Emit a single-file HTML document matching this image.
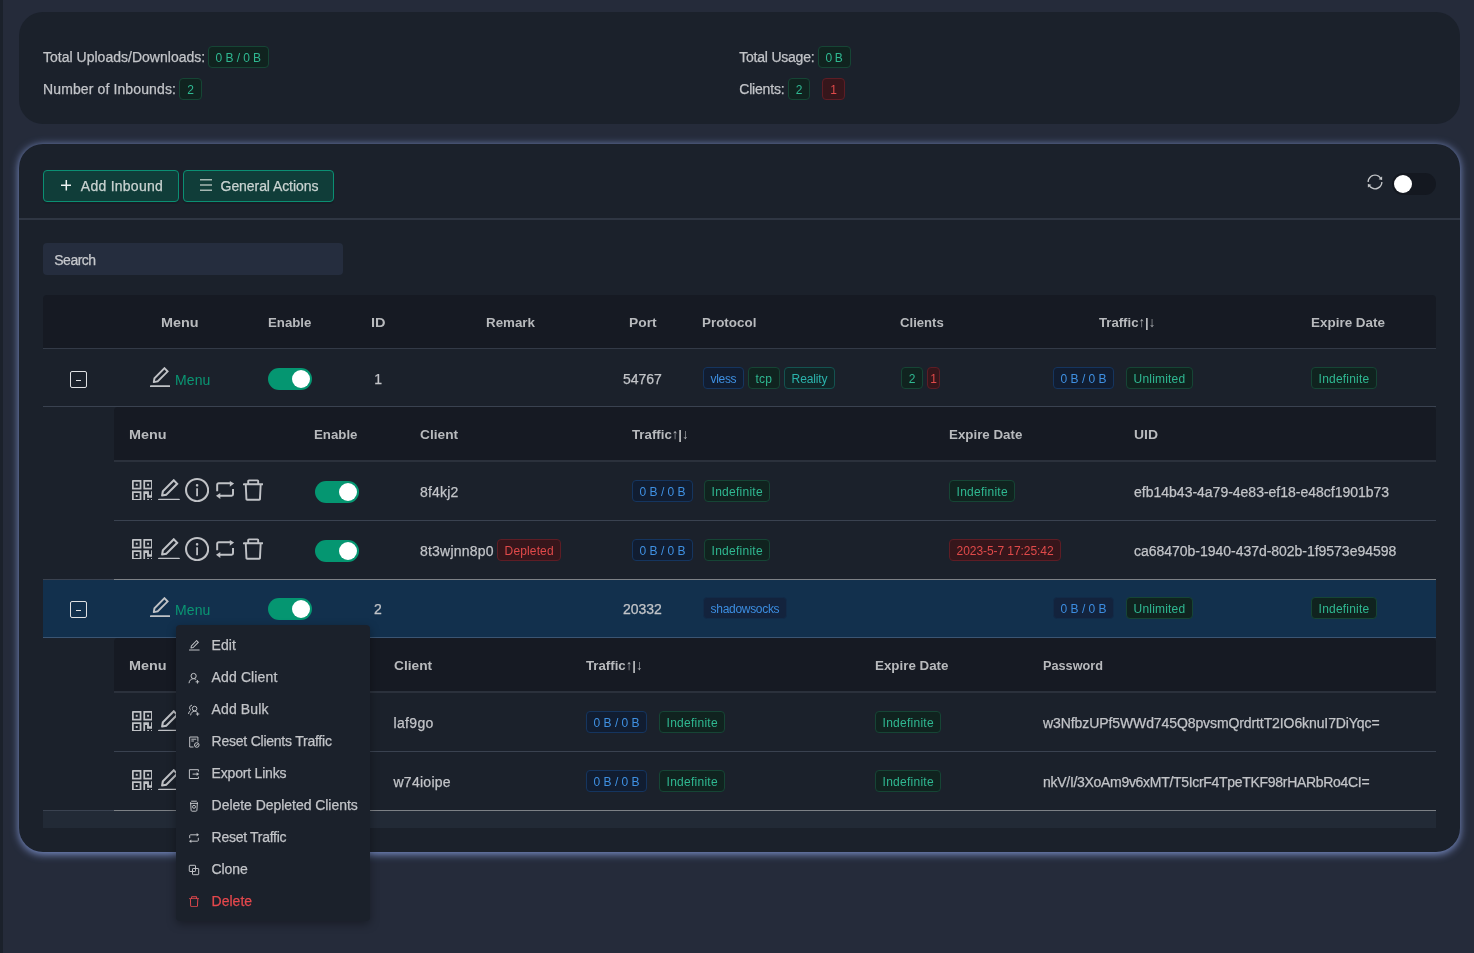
<!DOCTYPE html>
<html lang="en"><head><meta charset="utf-8"><title>Inbounds</title>
<style>
html,body{margin:0;padding:0}
body{width:1474px;height:953px;overflow:hidden;background:#252b3a;font-family:"Liberation Sans", sans-serif;position:relative}
#r{position:absolute;left:0;top:0;width:1474px;height:953px;overflow:hidden;will-change:transform}
#r>div,.g>div,.g>svg,.g>span{position:absolute;display:block}
.g{position:absolute;left:0;top:0;width:0;height:0;display:block}
.t{white-space:pre;line-height:1}
.s{-webkit-text-stroke:0.25px currentColor}
.tag{height:20px;border:1px solid;border-radius:4px;box-sizing:content-box;margin:0}
.btn{height:32px;box-sizing:border-box;border:1px solid #0b8f73;border-radius:4px;background:#103d39;box-shadow:0 2px 0 rgba(0,0,0,.12)}
.sw{width:44px;height:22px;border-radius:11px}
.sw i{position:absolute;top:2px;width:18px;height:18px;border-radius:9px;background:#fff}
.exp{width:15px;height:15px;border:1px solid #dfe0e2;border-radius:2px}
.exp b{position:absolute;left:5px;top:8px;width:5px;height:1px;background:#dfe0e2}
.dd{background:#1b212b;border-radius:4px;box-shadow:0 3px 10px rgba(0,0,0,.35)}
</style></head>
<body><div id="r">
<div style="left:0px;top:0px;width:3px;height:953px;background:#1b212b;"></div>
<section class="g" id="stats-card">
<div style="left:19px;top:12px;width:1441px;height:112px;background:#1b212b;border-radius:24px;"></div>
<span class="t s" style="left:43.00px;top:50.15px;font-size:14px;color:#c2c4c8;letter-spacing:0.014px">Total Uploads/Downloads:</span>
<div class="tag" style="left:208px;top:46px;width:58.5px;background:#10231f;border-color:#164535"></div>
<span class="t" style="left:215.60px;top:51.94px;font-size:12px;color:#2fb891;letter-spacing:-0.066px">0 B / 0 B</span>
<span class="t s" style="left:43.00px;top:82.15px;font-size:14px;color:#c2c4c8;letter-spacing:0.119px">Number of Inbounds:</span>
<div class="tag" style="left:179px;top:78px;width:21px;background:#10231f;border-color:#164535"></div>
<span class="t" style="left:187.16px;top:83.94px;font-size:12px;color:#2fb891;letter-spacing:0.000px">2</span>
<span class="t s" style="left:739.30px;top:50.15px;font-size:14px;color:#c2c4c8;letter-spacing:-0.230px">Total Usage:</span>
<div class="tag" style="left:818px;top:46px;width:30.700000000000045px;background:#10231f;border-color:#164535"></div>
<span class="t" style="left:825.60px;top:51.94px;font-size:12px;color:#2fb891;letter-spacing:-0.458px">0 B</span>
<span class="t s" style="left:739.30px;top:82.15px;font-size:14px;color:#c2c4c8;letter-spacing:-0.198px">Clients:</span>
<div class="tag" style="left:788px;top:78px;width:20px;background:#10231f;border-color:#164535"></div>
<span class="t" style="left:795.66px;top:83.94px;font-size:12px;color:#2fb891;letter-spacing:0.000px">2</span>
<div class="tag" style="left:822px;top:78px;width:21px;background:#36161b;border-color:#5e1d25"></div>
<span class="t" style="left:830.16px;top:83.94px;font-size:12px;color:#e04a4a;letter-spacing:0.000px">1</span>
</section>
<section class="g" id="inbounds-card">
<div style="left:19px;top:144px;width:1441px;height:708px;background:#1b212b;border-radius:24px;box-shadow:0 1.2px 8.5px 0 rgb(126,147,206);"></div>
<div style="left:19px;top:218.4px;width:1441px;height:1.2px;background:#2f3643;"></div>
<div class="btn" style="left:43px;top:170px;width:136px"></div>
<div class="btn" style="left:183px;top:170px;width:151px"></div>
<svg style="left:60.7px;top:180.1px;" width="10.6" height="10.6" viewBox="0 0 12 12" fill="#eef2f1"><path d="M5.15 0h1.7v12h-1.7zM0 5.15h12v1.7H0z"/></svg>
<svg style="left:200px;top:179.3px;" width="12.2" height="12.2" viewBox="0 0 12.2 12.2" fill="#a6b8b3"><path d="M0 0.1h12.2v1.5H0zM0 5.35h12.2v1.5H0zM0 10.6h12.2v1.5H0z"/></svg>
<span class="t s" style="left:80.80px;top:179.05px;font-size:14px;color:#c9d3d1;letter-spacing:0.259px">Add Inbound</span>
<span class="t s" style="left:220.60px;top:179.05px;font-size:14px;color:#c9d3d1;letter-spacing:-0.075px">General Actions</span>
<svg style="left:1367px;top:174px;" width="16" height="16" viewBox="64 64 896 896" fill="#c4c6c9"><path d="M168 504.200c1-43.700 10-86.100 26.900-126 17.300-41 42.100-77.700 73.700-109.400S337 212.300 378 195c42.400-17.900 87.400-27 133.900-27s91.500 9.100 133.800 27A341.500 341.500 0 0 1 755 268.800c9.900 9.900 19.200 20.400 27.800 31.400l-60.200 47a8 8 0 0 0 3 14.100l175.700 43c5 1.200 9.900-2.600 9.900-7.700l.8-180.900c0-6.700-7.700-10.500-12.900-6.300l-56.400 44.100C765.800 155.100 646.200 92 511.800 92 282.700 92 96.300 275.600 92 503.800a8 8 0 0 0 8 8.200h60c4.400 0 7.900-3.500 8-7.800zm756 7.800h-60c-4.400 0-7.900 3.500-8 7.800-1 43.700-10 86.100-26.900 126-17.300 41-42.100 77.800-73.700 109.400A342.450 342.450 0 0 1 512.100 856a342.240 342.240 0 0 1-243.200-100.800c-9.900-9.900-19.200-20.400-27.800-31.400l60.200-47a8 8 0 0 0-3-14.100l-175.700-43c-5-1.200-9.900 2.600-9.900 7.700l-.7 181c0 6.700 7.700 10.500 12.900 6.300l56.400-44.100C258.200 868.900 377.800 932 512.200 932c229.200 0 415.500-183.700 419.800-411.800a8 8 0 0 0-8-8.200z"/></svg>
<div class="sw" style="left:1392px;top:173px;background:#141820"><i style="left:2px"></i></div>
<div style="left:43px;top:243px;width:300px;height:32px;background:#252d3e;border-radius:4px;"></div>
<span class="t s" style="left:54.30px;top:252.85px;font-size:14px;color:#c6c8cc;letter-spacing:-0.512px">Search</span>
<div style="left:43px;top:295px;width:1393px;height:53px;background:#161a23;border-radius:4px 4px 0 0;"></div>
<div style="left:43px;top:348px;width:1393px;height:1px;background:#333a47;"></div>
<span class="t" style="left:161.00px;top:316.10px;font-size:13.7px;color:#b8babd;letter-spacing:0.000px;font-weight:700;transform:scaleX(1.0517);transform-origin:0 0">Menu</span>
<span class="t" style="left:268.40px;top:316.10px;font-size:13.7px;color:#b8babd;letter-spacing:0.000px;font-weight:700;transform:scaleX(0.9668);transform-origin:0 0">Enable</span>
<span class="t" style="left:370.50px;top:316.10px;font-size:13.7px;color:#b8babd;letter-spacing:0.000px;font-weight:700;transform:scaleX(1.0594);transform-origin:0 0">ID</span>
<span class="t" style="left:485.90px;top:316.10px;font-size:13.7px;color:#b8babd;letter-spacing:0.000px;font-weight:700;transform:scaleX(0.9757);transform-origin:0 0">Remark</span>
<span class="t" style="left:628.90px;top:316.10px;font-size:13.7px;color:#b8babd;letter-spacing:0.000px;font-weight:700;transform:scaleX(1.0082);transform-origin:0 0">Port</span>
<span class="t" style="left:702.20px;top:316.10px;font-size:13.7px;color:#b8babd;letter-spacing:0.000px;font-weight:700;transform:scaleX(0.9799);transform-origin:0 0">Protocol</span>
<span class="t" style="left:900.40px;top:316.10px;font-size:13.7px;color:#b8babd;letter-spacing:0.000px;font-weight:700;transform:scaleX(0.9597);transform-origin:0 0">Clients</span>
<span class="t" style="left:1099.30px;top:316.10px;font-size:13.7px;color:#b8babd;letter-spacing:0.000px;font-weight:700;transform:scaleX(0.9609);transform-origin:0 0">Traffic↑|↓</span>
<span class="t" style="left:1310.60px;top:316.10px;font-size:13.7px;color:#b8babd;letter-spacing:0.000px;font-weight:700;transform:scaleX(0.9824);transform-origin:0 0">Expire Date</span>
<div style="left:43px;top:406px;width:1393px;height:1px;background:#3a4250;"></div>
<div class="exp" style="left:70px;top:371px"><b></b></div>
<svg style="left:149.8px;top:366.9px;" width="20.1" height="20.1" viewBox="112 112 800 800" fill="#c0c2c6"><path d="M257.7 752c2 0 4-.2 6-.5L431.9 722c2-.4 3.9-1.3 5.3-2.8l423.9-423.9a9.96 9.96 0 0 0 0-14.1L694.9 114.900c-1.900-1.900-4.400-2.900-7.100-2.900s-5.200 1-7.100 2.900L256.800 538.800c-1.500 1.500-2.400 3.300-2.800 5.300l-29.500 168.200a33.500 33.500 0 0 0 9.400 29.800c6.600 6.400 14.900 9.900 23.800 9.900zm67.400-174.400L687.800 215l73.300 73.300-362.700 362.600-88.900 15.700 15.600-89zM880 836H144c-17.700 0-32 14.300-32 32v36c0 4.400 3.600 8 8 8h784c4.400 0 8-3.600 8-8v-36c0-17.700-14.300-32-32-32z"/></svg>
<span class="t" style="left:175.00px;top:373.05px;font-size:14px;color:#0a9673;letter-spacing:0.123px">Menu</span>
<div class="sw" style="left:268px;top:368px;background:#059671"><i style="left:24px"></i></div>
<span class="t s" style="left:374.15px;top:372.35px;font-size:14px;color:#c2c4c8;letter-spacing:0.000px">1</span>
<span class="t s" style="left:622.90px;top:372.35px;font-size:14px;color:#c2c4c8;letter-spacing:0.016px">54767</span>
<div class="tag" style="left:703px;top:367px;width:39px;background:#111d31;border-color:#15355f"></div>
<span class="t" style="left:710.60px;top:372.94px;font-size:12px;color:#3f90e2;letter-spacing:-0.336px">vless</span>
<div class="tag" style="left:748px;top:367px;width:30px;background:#10231f;border-color:#164535"></div>
<span class="t" style="left:755.60px;top:372.94px;font-size:12px;color:#2fb891;letter-spacing:0.192px">tcp</span>
<div class="tag" style="left:784px;top:367px;width:49px;background:#112527;border-color:#145350"></div>
<span class="t" style="left:791.60px;top:372.94px;font-size:12px;color:#2bb3ac;letter-spacing:-0.115px">Reality</span>
<div class="tag" style="left:901px;top:367px;width:20px;background:#10231f;border-color:#164535"></div>
<span class="t" style="left:908.66px;top:372.94px;font-size:12px;color:#2fb891;letter-spacing:0.000px">2</span>
<div class="tag" style="left:927px;top:367px;width:11px;background:#36161b;border-color:#5e1d25"></div>
<span class="t" style="left:930.16px;top:372.94px;font-size:12px;color:#e04a4a;letter-spacing:0.000px">1</span>
<div class="tag" style="left:1053px;top:367px;width:59px;background:#111d31;border-color:#15355f"></div>
<span class="t" style="left:1060.60px;top:372.94px;font-size:12px;color:#3f90e2;letter-spacing:-0.004px">0 B / 0 B</span>
<div class="tag" style="left:1126px;top:367px;width:64.5px;background:#10231f;border-color:#164535"></div>
<span class="t" style="left:1133.60px;top:372.94px;font-size:12px;color:#2fb891;letter-spacing:0.186px">Unlimited</span>
<div class="tag" style="left:1311px;top:367px;width:63.5px;background:#10231f;border-color:#164535"></div>
<span class="t" style="left:1318.60px;top:372.94px;font-size:12px;color:#2fb891;letter-spacing:0.200px">Indefinite</span>
<div style="left:114px;top:407px;width:1322px;height:53px;background:#161a23;border-radius:4px 4px 0 0;"></div>
<div style="left:114px;top:460px;width:1322px;height:2px;background:#2b313c;"></div>
<span class="t" style="left:129.20px;top:428.40px;font-size:13.7px;color:#b8babd;letter-spacing:0.000px;font-weight:700;transform:scaleX(1.0517);transform-origin:0 0">Menu</span>
<span class="t" style="left:314.10px;top:428.40px;font-size:13.7px;color:#b8babd;letter-spacing:0.000px;font-weight:700;transform:scaleX(0.9690);transform-origin:0 0">Enable</span>
<span class="t" style="left:420.00px;top:428.40px;font-size:13.7px;color:#b8babd;letter-spacing:0.000px;font-weight:700;transform:scaleX(1.0018);transform-origin:0 0">Client</span>
<span class="t" style="left:631.60px;top:428.40px;font-size:13.7px;color:#b8babd;letter-spacing:0.000px;font-weight:700;transform:scaleX(0.9677);transform-origin:0 0">Traffic↑|↓</span>
<span class="t" style="left:949.20px;top:428.40px;font-size:13.7px;color:#b8babd;letter-spacing:0.000px;font-weight:700;transform:scaleX(0.9744);transform-origin:0 0">Expire Date</span>
<span class="t" style="left:1134.30px;top:428.40px;font-size:13.7px;color:#b8babd;letter-spacing:0.000px;font-weight:700;transform:scaleX(1.0179);transform-origin:0 0">UID</span>
<div style="left:114px;top:520px;width:1322px;height:1px;background:#3a4250;"></div>
<svg style="left:131.6px;top:479.7px;" width="20.8" height="20.8" viewBox="128 128 768 768" fill="#c0c2c6"><path d="M468 128H160c-17.700 0-32 14.300-32 32v308c0 4.400 3.600 8 8 8h332c4.400 0 8-3.600 8-8V136c0-4.400-3.600-8-8-8zm-56 284H192V192h220v220zm-138-74h56c4.400 0 8-3.600 8-8v-56c0-4.400-3.600-8-8-8h-56c-4.400 0-8 3.600-8 8v56c0 4.400 3.600 8 8 8zm194 210H136c-4.400 0-8 3.600-8 8v308c0 17.700 14.300 32 32 32h308c4.400 0 8-3.600 8-8V556c0-4.400-3.600-8-8-8zm-56 284H192V612h220v220zm-138-74h56c4.400 0 8-3.600 8-8v-56c0-4.400-3.600-8-8-8h-56c-4.400 0-8 3.600-8 8v56c0 4.400 3.600 8 8 8zm590-630H556c-4.400 0-8 3.600-8 8v332c0 4.400 3.600 8 8 8h332c4.400 0 8-3.600 8-8V160c0-17.700-14.300-32-32-32zm-32 284H612V192h220v220zm-138-74h56c4.400 0 8-3.600 8-8v-56c0-4.400-3.600-8-8-8h-56c-4.400 0-8 3.600-8 8v56c0 4.400 3.600 8 8 8zm194 210h-48c-4.400 0-8 3.600-8 8v134h-78V556c0-4.400-3.600-8-8-8H556c-4.400 0-8 3.600-8 8v332c0 4.400 3.600 8 8 8h48c4.400 0 8-3.600 8-8V644h72v134c0 4.400 3.600 8 8 8h190c4.400 0 8-3.600 8-8V556c0-4.400-3.600-8-8-8zM746 832h-48c-4.400 0-8 3.600-8 8v48c0 4.400 3.600 8 8 8h48c4.400 0 8-3.600 8-8v-48c0-4.400-3.600-8-8-8zm142 0h-48c-4.400 0-8 3.600-8 8v48c0 4.400 3.600 8 8 8h48c4.400 0 8-3.600 8-8v-48c0-4.400-3.600-8-8-8z"/></svg>
<svg style="left:158.1px;top:478.6px;" width="21.9" height="21.9" viewBox="112 112 800 800" fill="#c0c2c6"><path d="M257.7 752c2 0 4-.2 6-.5L431.9 722c2-.4 3.9-1.3 5.3-2.8l423.9-423.9a9.96 9.96 0 0 0 0-14.1L694.9 114.900c-1.900-1.900-4.400-2.900-7.100-2.900s-5.200 1-7.100 2.900L256.800 538.800c-1.500 1.500-2.400 3.300-2.800 5.300l-29.500 168.200a33.500 33.500 0 0 0 9.400 29.800c6.600 6.400 14.900 9.900 23.800 9.900zm67.400-174.400L687.800 215l73.300 73.300-362.700 362.600-88.900 15.700 15.600-89zM880 836H144c-17.700 0-32 14.300-32 32v36c0 4.400 3.600 8 8 8h784c4.400 0 8-3.600 8-8v-36c0-17.700-14.300-32-32-32z"/></svg>
<svg style="left:184.9px;top:477.9px;" width="24.2" height="24.2" viewBox="64 64 896 896" fill="#c0c2c6"><path d="M512 64C264.600 64 64 264.600 64 512s200.600 448 448 448 448-200.600 448-448S759.400 64 512 64zm0 820c-205.400 0-372-166.600-372-372s166.600-372 372-372 372 166.600 372 372-166.600 372-372 372zM464 336a48 48 0 1 0 96 0 48 48 0 1 0-96 0zm72 112h-48c-4.400 0-8 3.600-8 8v272c0 4.400 3.600 8 8 8h48c4.400 0 8-3.600 8-8V456c0-4.400-3.600-8-8-8z"/></svg>
<svg style="left:215.8px;top:480.9px;overflow:visible;" width="18.2" height="18.2" viewBox="-0.2 -0.2 18.6 18.6" fill="#c0c2c6"><path d="M1 10.2V3.7a1.5 1.5 0 0 1 1.5-1.5H14.3" fill="none" stroke="#c0c2c6" stroke-width="2"/><path d="M13.9 -0.1L18.3 2.4 13.9 5.7z"/><path d="M17.2 8V13.4a1.5 1.5 0 0 1-1.5 1.5H3.8" fill="none" stroke="#c0c2c6" stroke-width="2"/><path d="M4.2 12.1L-0.2 15 4.2 18.1z"/></svg>
<svg style="left:242.9px;top:479.2px;" width="20.4" height="21.7" viewBox="128 112 768 784" fill="#c0c2c6"><path d="M360 184h-8c4.400 0 8-3.600 8-8v8h304v-8c0 4.400 3.600 8 8 8h-8v72h72v-80c0-35.300-28.700-64-64-64H352c-35.300 0-64 28.700-64 64v80h72v-72zm504 72H160c-17.700 0-32 14.300-32 32v32c0 4.400 3.600 8 8 8h60.400l24.700 523c1.600 34.100 29.800 61 63.900 61h454c34.200 0 62.300-26.800 63.900-61l24.700-523H888c4.400 0 8-3.600 8-8v-32c0-17.700-14.300-32-32-32zM731.300 840H292.700l-24.200-512h487l-24.200 512z"/></svg>
<div class="sw" style="left:315px;top:481px;background:#059671"><i style="left:24px"></i></div>
<span class="t s" style="left:420.00px;top:485.15px;font-size:14px;color:#c2c4c8;letter-spacing:0.208px">8f4kj2</span>
<div class="tag" style="left:632px;top:480px;width:59px;background:#111d31;border-color:#15355f"></div>
<span class="t" style="left:639.60px;top:485.94px;font-size:12px;color:#3f90e2;letter-spacing:-0.004px">0 B / 0 B</span>
<div class="tag" style="left:704px;top:480px;width:64px;background:#10231f;border-color:#164535"></div>
<span class="t" style="left:711.60px;top:485.94px;font-size:12px;color:#2fb891;letter-spacing:0.255px">Indefinite</span>
<div class="tag" style="left:949px;top:480px;width:64px;background:#10231f;border-color:#164535"></div>
<span class="t" style="left:956.60px;top:485.94px;font-size:12px;color:#2fb891;letter-spacing:0.255px">Indefinite</span>
<span class="t s" style="left:1134.10px;top:485.15px;font-size:14px;color:#c2c4c8;letter-spacing:-0.010px">efb14b43-4a79-4e83-ef18-e48cf1901b73</span>
<div style="left:114px;top:579px;width:1322px;height:1px;background:#7d8186;"></div>
<svg style="left:131.6px;top:538.7px;" width="20.8" height="20.8" viewBox="128 128 768 768" fill="#c0c2c6"><path d="M468 128H160c-17.700 0-32 14.300-32 32v308c0 4.400 3.600 8 8 8h332c4.400 0 8-3.600 8-8V136c0-4.400-3.600-8-8-8zm-56 284H192V192h220v220zm-138-74h56c4.400 0 8-3.600 8-8v-56c0-4.400-3.600-8-8-8h-56c-4.400 0-8 3.600-8 8v56c0 4.400 3.600 8 8 8zm194 210H136c-4.400 0-8 3.600-8 8v308c0 17.700 14.300 32 32 32h308c4.400 0 8-3.600 8-8V556c0-4.400-3.600-8-8-8zm-56 284H192V612h220v220zm-138-74h56c4.400 0 8-3.600 8-8v-56c0-4.400-3.600-8-8-8h-56c-4.400 0-8 3.600-8 8v56c0 4.400 3.600 8 8 8zm590-630H556c-4.400 0-8 3.600-8 8v332c0 4.400 3.600 8 8 8h332c4.400 0 8-3.600 8-8V160c0-17.700-14.300-32-32-32zm-32 284H612V192h220v220zm-138-74h56c4.400 0 8-3.600 8-8v-56c0-4.400-3.600-8-8-8h-56c-4.400 0-8 3.600-8 8v56c0 4.400 3.600 8 8 8zm194 210h-48c-4.400 0-8 3.600-8 8v134h-78V556c0-4.400-3.600-8-8-8H556c-4.400 0-8 3.600-8 8v332c0 4.400 3.600 8 8 8h48c4.400 0 8-3.600 8-8V644h72v134c0 4.400 3.600 8 8 8h190c4.400 0 8-3.600 8-8V556c0-4.400-3.600-8-8-8zM746 832h-48c-4.400 0-8 3.600-8 8v48c0 4.400 3.600 8 8 8h48c4.400 0 8-3.600 8-8v-48c0-4.400-3.600-8-8-8zm142 0h-48c-4.400 0-8 3.600-8 8v48c0 4.400 3.600 8 8 8h48c4.400 0 8-3.600 8-8v-48c0-4.400-3.600-8-8-8z"/></svg>
<svg style="left:158.1px;top:537.6px;" width="21.9" height="21.9" viewBox="112 112 800 800" fill="#c0c2c6"><path d="M257.7 752c2 0 4-.2 6-.5L431.9 722c2-.4 3.9-1.3 5.3-2.8l423.9-423.9a9.96 9.96 0 0 0 0-14.1L694.9 114.900c-1.900-1.900-4.400-2.900-7.100-2.900s-5.200 1-7.100 2.900L256.800 538.800c-1.500 1.500-2.400 3.300-2.800 5.300l-29.500 168.200a33.500 33.500 0 0 0 9.400 29.800c6.600 6.400 14.900 9.900 23.800 9.900zm67.400-174.400L687.800 215l73.300 73.300-362.700 362.600-88.900 15.700 15.600-89zM880 836H144c-17.700 0-32 14.300-32 32v36c0 4.400 3.600 8 8 8h784c4.400 0 8-3.600 8-8v-36c0-17.700-14.300-32-32-32z"/></svg>
<svg style="left:184.9px;top:536.9px;" width="24.2" height="24.2" viewBox="64 64 896 896" fill="#c0c2c6"><path d="M512 64C264.600 64 64 264.600 64 512s200.600 448 448 448 448-200.600 448-448S759.400 64 512 64zm0 820c-205.400 0-372-166.600-372-372s166.600-372 372-372 372 166.600 372 372-166.600 372-372 372zM464 336a48 48 0 1 0 96 0 48 48 0 1 0-96 0zm72 112h-48c-4.400 0-8 3.600-8 8v272c0 4.400 3.600 8 8 8h48c4.400 0 8-3.600 8-8V456c0-4.400-3.600-8-8-8z"/></svg>
<svg style="left:215.8px;top:539.9px;overflow:visible;" width="18.2" height="18.2" viewBox="-0.2 -0.2 18.6 18.6" fill="#c0c2c6"><path d="M1 10.2V3.7a1.5 1.5 0 0 1 1.5-1.5H14.3" fill="none" stroke="#c0c2c6" stroke-width="2"/><path d="M13.9 -0.1L18.3 2.4 13.9 5.7z"/><path d="M17.2 8V13.4a1.5 1.5 0 0 1-1.5 1.5H3.8" fill="none" stroke="#c0c2c6" stroke-width="2"/><path d="M4.2 12.1L-0.2 15 4.2 18.1z"/></svg>
<svg style="left:242.9px;top:538.2px;" width="20.4" height="21.7" viewBox="128 112 768 784" fill="#c0c2c6"><path d="M360 184h-8c4.400 0 8-3.600 8-8v8h304v-8c0 4.400 3.600 8 8 8h-8v72h72v-80c0-35.300-28.700-64-64-64H352c-35.300 0-64 28.700-64 64v80h72v-72zm504 72H160c-17.700 0-32 14.300-32 32v32c0 4.400 3.600 8 8 8h60.400l24.700 523c1.600 34.100 29.800 61 63.900 61h454c34.200 0 62.300-26.800 63.900-61l24.700-523H888c4.400 0 8-3.600 8-8v-32c0-17.700-14.300-32-32-32zM731.300 840H292.700l-24.200-512h487l-24.200 512z"/></svg>
<div class="sw" style="left:315px;top:540px;background:#059671"><i style="left:24px"></i></div>
<span class="t s" style="left:420.00px;top:544.15px;font-size:14px;color:#c2c4c8;letter-spacing:0.219px">8t3wjnn8p0</span>
<div class="tag" style="left:497px;top:539px;width:62px;background:#36161b;border-color:#5e1d25"></div>
<span class="t" style="left:504.60px;top:544.94px;font-size:12px;color:#e04a4a;letter-spacing:0.136px">Depleted</span>
<div class="tag" style="left:632px;top:539px;width:59px;background:#111d31;border-color:#15355f"></div>
<span class="t" style="left:639.60px;top:544.94px;font-size:12px;color:#3f90e2;letter-spacing:-0.004px">0 B / 0 B</span>
<div class="tag" style="left:704px;top:539px;width:64px;background:#10231f;border-color:#164535"></div>
<span class="t" style="left:711.60px;top:544.94px;font-size:12px;color:#2fb891;letter-spacing:0.255px">Indefinite</span>
<div class="tag" style="left:949px;top:539px;width:110px;background:#36161b;border-color:#5e1d25"></div>
<span class="t" style="left:956.60px;top:544.94px;font-size:12px;color:#e04a4a;letter-spacing:-0.068px">2023-5-7 17:25:42</span>
<span class="t s" style="left:1134.10px;top:544.15px;font-size:14px;color:#c2c4c8;letter-spacing:-0.029px">ca68470b-1940-437d-802b-1f9573e94598</span>
<div style="left:43px;top:580px;width:1393px;height:57px;background:#12304d;"></div>
<div style="left:43px;top:637px;width:1393px;height:1px;background:#3b5573;"></div>
<div class="exp" style="left:70px;top:601px"><b></b></div>
<svg style="left:149.8px;top:596.9px;" width="20.1" height="20.1" viewBox="112 112 800 800" fill="#c0c2c6"><path d="M257.7 752c2 0 4-.2 6-.5L431.9 722c2-.4 3.9-1.3 5.3-2.8l423.9-423.9a9.96 9.96 0 0 0 0-14.1L694.9 114.900c-1.900-1.900-4.400-2.900-7.100-2.900s-5.200 1-7.100 2.900L256.800 538.800c-1.500 1.500-2.400 3.300-2.800 5.300l-29.500 168.200a33.500 33.500 0 0 0 9.400 29.800c6.600 6.400 14.900 9.900 23.800 9.900zm67.400-174.400L687.800 215l73.300 73.300-362.700 362.600-88.900 15.700 15.600-89zM880 836H144c-17.700 0-32 14.300-32 32v36c0 4.400 3.600 8 8 8h784c4.400 0 8-3.600 8-8v-36c0-17.700-14.300-32-32-32z"/></svg>
<span class="t" style="left:175.00px;top:603.05px;font-size:14px;color:#0a9673;letter-spacing:0.123px">Menu</span>
<div class="sw" style="left:268px;top:598px;background:#059671"><i style="left:24px"></i></div>
<span class="t s" style="left:373.95px;top:602.35px;font-size:14px;color:#c2c4c8;letter-spacing:0.000px">2</span>
<span class="t s" style="left:623.10px;top:602.35px;font-size:14px;color:#c2c4c8;letter-spacing:-0.059px">20332</span>
<div class="tag" style="left:703px;top:597px;width:82px;background:#13233d;border-color:#122b48"></div>
<span class="t" style="left:710.60px;top:602.94px;font-size:12px;color:#3c8de0;letter-spacing:-0.305px">shadowsocks</span>
<div class="tag" style="left:1053px;top:597px;width:59px;background:#13233d;border-color:#122b48"></div>
<span class="t" style="left:1060.60px;top:602.94px;font-size:12px;color:#3c8de0;letter-spacing:-0.004px">0 B / 0 B</span>
<div class="tag" style="left:1126px;top:597px;width:64.5px;background:#10231f;border-color:#164535"></div>
<span class="t" style="left:1133.60px;top:602.94px;font-size:12px;color:#2fb891;letter-spacing:0.186px">Unlimited</span>
<div class="tag" style="left:1311px;top:597px;width:63.5px;background:#10231f;border-color:#164535"></div>
<span class="t" style="left:1318.60px;top:602.94px;font-size:12px;color:#2fb891;letter-spacing:0.200px">Indefinite</span>
<div style="left:114px;top:638px;width:1322px;height:53px;background:#161a23;border-radius:4px 4px 0 0;"></div>
<div style="left:114px;top:691px;width:1322px;height:2px;background:#2b313c;"></div>
<span class="t" style="left:129.20px;top:659.40px;font-size:13.7px;color:#b8babd;letter-spacing:0.000px;font-weight:700;transform:scaleX(1.0517);transform-origin:0 0">Menu</span>
<span class="t" style="left:314.10px;top:659.40px;font-size:13.7px;color:#b8babd;letter-spacing:0.000px;font-weight:700;transform:scaleX(0.9690);transform-origin:0 0">Enable</span>
<span class="t" style="left:393.50px;top:659.40px;font-size:13.7px;color:#b8babd;letter-spacing:0.000px;font-weight:700;transform:scaleX(1.0018);transform-origin:0 0">Client</span>
<span class="t" style="left:586.20px;top:659.40px;font-size:13.7px;color:#b8babd;letter-spacing:0.000px;font-weight:700;transform:scaleX(0.9660);transform-origin:0 0">Traffic↑|↓</span>
<span class="t" style="left:874.60px;top:659.40px;font-size:13.7px;color:#b8babd;letter-spacing:0.000px;font-weight:700;transform:scaleX(0.9757);transform-origin:0 0">Expire Date</span>
<span class="t" style="left:1043.10px;top:659.40px;font-size:13.7px;color:#b8babd;letter-spacing:0.000px;font-weight:700;transform:scaleX(0.9278);transform-origin:0 0">Password</span>
<div style="left:114px;top:751px;width:1322px;height:1px;background:#3a4250;"></div>
<svg style="left:131.6px;top:710.7px;" width="20.8" height="20.8" viewBox="128 128 768 768" fill="#c0c2c6"><path d="M468 128H160c-17.700 0-32 14.300-32 32v308c0 4.400 3.600 8 8 8h332c4.400 0 8-3.600 8-8V136c0-4.400-3.600-8-8-8zm-56 284H192V192h220v220zm-138-74h56c4.400 0 8-3.600 8-8v-56c0-4.400-3.600-8-8-8h-56c-4.400 0-8 3.600-8 8v56c0 4.400 3.600 8 8 8zm194 210H136c-4.400 0-8 3.600-8 8v308c0 17.700 14.300 32 32 32h308c4.400 0 8-3.600 8-8V556c0-4.400-3.600-8-8-8zm-56 284H192V612h220v220zm-138-74h56c4.400 0 8-3.600 8-8v-56c0-4.400-3.600-8-8-8h-56c-4.400 0-8 3.600-8 8v56c0 4.400 3.600 8 8 8zm590-630H556c-4.400 0-8 3.600-8 8v332c0 4.400 3.600 8 8 8h332c4.400 0 8-3.600 8-8V160c0-17.700-14.300-32-32-32zm-32 284H612V192h220v220zm-138-74h56c4.400 0 8-3.600 8-8v-56c0-4.400-3.600-8-8-8h-56c-4.400 0-8 3.600-8 8v56c0 4.400 3.600 8 8 8zm194 210h-48c-4.400 0-8 3.600-8 8v134h-78V556c0-4.400-3.600-8-8-8H556c-4.400 0-8 3.600-8 8v332c0 4.400 3.600 8 8 8h48c4.400 0 8-3.600 8-8V644h72v134c0 4.400 3.600 8 8 8h190c4.400 0 8-3.600 8-8V556c0-4.400-3.600-8-8-8zM746 832h-48c-4.400 0-8 3.600-8 8v48c0 4.400 3.600 8 8 8h48c4.400 0 8-3.600 8-8v-48c0-4.400-3.600-8-8-8zm142 0h-48c-4.400 0-8 3.600-8 8v48c0 4.400 3.600 8 8 8h48c4.400 0 8-3.600 8-8v-48c0-4.400-3.600-8-8-8z"/></svg>
<svg style="left:158.1px;top:709.6px;" width="21.9" height="21.9" viewBox="112 112 800 800" fill="#c0c2c6"><path d="M257.7 752c2 0 4-.2 6-.5L431.9 722c2-.4 3.9-1.3 5.3-2.8l423.9-423.9a9.96 9.96 0 0 0 0-14.1L694.9 114.900c-1.900-1.900-4.400-2.900-7.100-2.900s-5.200 1-7.100 2.900L256.800 538.800c-1.500 1.500-2.400 3.300-2.800 5.300l-29.500 168.200a33.500 33.500 0 0 0 9.400 29.800c6.600 6.400 14.900 9.900 23.800 9.900zm67.400-174.400L687.800 215l73.300 73.300-362.700 362.600-88.900 15.700 15.600-89zM880 836H144c-17.700 0-32 14.300-32 32v36c0 4.400 3.600 8 8 8h784c4.400 0 8-3.600 8-8v-36c0-17.700-14.300-32-32-32z"/></svg>
<svg style="left:184.9px;top:708.9px;" width="24.2" height="24.2" viewBox="64 64 896 896" fill="#c0c2c6"><path d="M512 64C264.600 64 64 264.600 64 512s200.600 448 448 448 448-200.600 448-448S759.400 64 512 64zm0 820c-205.400 0-372-166.600-372-372s166.600-372 372-372 372 166.600 372 372-166.600 372-372 372zM464 336a48 48 0 1 0 96 0 48 48 0 1 0-96 0zm72 112h-48c-4.400 0-8 3.600-8 8v272c0 4.400 3.600 8 8 8h48c4.400 0 8-3.600 8-8V456c0-4.400-3.600-8-8-8z"/></svg>
<svg style="left:215.8px;top:711.9px;overflow:visible;" width="18.2" height="18.2" viewBox="-0.2 -0.2 18.6 18.6" fill="#c0c2c6"><path d="M1 10.2V3.7a1.5 1.5 0 0 1 1.5-1.5H14.3" fill="none" stroke="#c0c2c6" stroke-width="2"/><path d="M13.9 -0.1L18.3 2.4 13.9 5.7z"/><path d="M17.2 8V13.4a1.5 1.5 0 0 1-1.5 1.5H3.8" fill="none" stroke="#c0c2c6" stroke-width="2"/><path d="M4.2 12.1L-0.2 15 4.2 18.1z"/></svg>
<svg style="left:242.9px;top:710.2px;" width="20.4" height="21.7" viewBox="128 112 768 784" fill="#c0c2c6"><path d="M360 184h-8c4.400 0 8-3.600 8-8v8h304v-8c0 4.400 3.600 8 8 8h-8v72h72v-80c0-35.300-28.700-64-64-64H352c-35.300 0-64 28.700-64 64v80h72v-72zm504 72H160c-17.700 0-32 14.300-32 32v32c0 4.400 3.600 8 8 8h60.400l24.700 523c1.600 34.100 29.800 61 63.900 61h454c34.200 0 62.300-26.800 63.900-61l24.700-523H888c4.400 0 8-3.600 8-8v-32c0-17.700-14.300-32-32-32zM731.300 840H292.700l-24.200-512h487l-24.200 512z"/></svg>
<div class="sw" style="left:315px;top:712px;background:#059671"><i style="left:24px"></i></div>
<span class="t s" style="left:393.50px;top:716.15px;font-size:14px;color:#c2c4c8;letter-spacing:0.329px">laf9go</span>
<div class="tag" style="left:586px;top:711px;width:59px;background:#111d31;border-color:#15355f"></div>
<span class="t" style="left:593.60px;top:716.94px;font-size:12px;color:#3f90e2;letter-spacing:-0.004px">0 B / 0 B</span>
<div class="tag" style="left:659px;top:711px;width:64px;background:#10231f;border-color:#164535"></div>
<span class="t" style="left:666.60px;top:716.94px;font-size:12px;color:#2fb891;letter-spacing:0.255px">Indefinite</span>
<div class="tag" style="left:875px;top:711px;width:64px;background:#10231f;border-color:#164535"></div>
<span class="t" style="left:882.60px;top:716.94px;font-size:12px;color:#2fb891;letter-spacing:0.255px">Indefinite</span>
<span class="t s" style="left:1043.10px;top:716.15px;font-size:14px;color:#c2c4c8;letter-spacing:-0.097px">w3NfbzUPf5WWd745Q8pvsmQrdrttT2IO6knuI7DiYqc=</span>
<div style="left:114px;top:810px;width:1322px;height:1px;background:#7d8186;"></div>
<svg style="left:131.6px;top:769.7px;" width="20.8" height="20.8" viewBox="128 128 768 768" fill="#c0c2c6"><path d="M468 128H160c-17.700 0-32 14.300-32 32v308c0 4.400 3.600 8 8 8h332c4.400 0 8-3.600 8-8V136c0-4.400-3.600-8-8-8zm-56 284H192V192h220v220zm-138-74h56c4.400 0 8-3.600 8-8v-56c0-4.400-3.600-8-8-8h-56c-4.400 0-8 3.600-8 8v56c0 4.400 3.600 8 8 8zm194 210H136c-4.400 0-8 3.600-8 8v308c0 17.700 14.300 32 32 32h308c4.400 0 8-3.600 8-8V556c0-4.400-3.600-8-8-8zm-56 284H192V612h220v220zm-138-74h56c4.400 0 8-3.600 8-8v-56c0-4.400-3.600-8-8-8h-56c-4.400 0-8 3.600-8 8v56c0 4.400 3.600 8 8 8zm590-630H556c-4.400 0-8 3.600-8 8v332c0 4.400 3.600 8 8 8h332c4.400 0 8-3.600 8-8V160c0-17.700-14.300-32-32-32zm-32 284H612V192h220v220zm-138-74h56c4.400 0 8-3.600 8-8v-56c0-4.400-3.600-8-8-8h-56c-4.400 0-8 3.600-8 8v56c0 4.400 3.600 8 8 8zm194 210h-48c-4.400 0-8 3.600-8 8v134h-78V556c0-4.400-3.600-8-8-8H556c-4.400 0-8 3.600-8 8v332c0 4.400 3.600 8 8 8h48c4.400 0 8-3.600 8-8V644h72v134c0 4.400 3.600 8 8 8h190c4.400 0 8-3.600 8-8V556c0-4.400-3.600-8-8-8zM746 832h-48c-4.400 0-8 3.600-8 8v48c0 4.400 3.600 8 8 8h48c4.400 0 8-3.600 8-8v-48c0-4.400-3.600-8-8-8zm142 0h-48c-4.400 0-8 3.600-8 8v48c0 4.400 3.600 8 8 8h48c4.400 0 8-3.600 8-8v-48c0-4.400-3.600-8-8-8z"/></svg>
<svg style="left:158.1px;top:768.6px;" width="21.9" height="21.9" viewBox="112 112 800 800" fill="#c0c2c6"><path d="M257.7 752c2 0 4-.2 6-.5L431.9 722c2-.4 3.9-1.3 5.3-2.8l423.9-423.9a9.96 9.96 0 0 0 0-14.1L694.9 114.900c-1.900-1.900-4.400-2.900-7.100-2.900s-5.200 1-7.100 2.900L256.800 538.800c-1.500 1.500-2.400 3.300-2.800 5.300l-29.500 168.200a33.500 33.500 0 0 0 9.400 29.800c6.600 6.400 14.900 9.900 23.800 9.900zm67.400-174.400L687.800 215l73.300 73.300-362.700 362.600-88.900 15.700 15.600-89zM880 836H144c-17.700 0-32 14.300-32 32v36c0 4.400 3.600 8 8 8h784c4.400 0 8-3.600 8-8v-36c0-17.700-14.300-32-32-32z"/></svg>
<svg style="left:184.9px;top:767.9px;" width="24.2" height="24.2" viewBox="64 64 896 896" fill="#c0c2c6"><path d="M512 64C264.600 64 64 264.600 64 512s200.600 448 448 448 448-200.600 448-448S759.400 64 512 64zm0 820c-205.400 0-372-166.600-372-372s166.600-372 372-372 372 166.600 372 372-166.600 372-372 372zM464 336a48 48 0 1 0 96 0 48 48 0 1 0-96 0zm72 112h-48c-4.400 0-8 3.600-8 8v272c0 4.400 3.600 8 8 8h48c4.400 0 8-3.600 8-8V456c0-4.400-3.600-8-8-8z"/></svg>
<svg style="left:215.8px;top:770.9px;overflow:visible;" width="18.2" height="18.2" viewBox="-0.2 -0.2 18.6 18.6" fill="#c0c2c6"><path d="M1 10.2V3.7a1.5 1.5 0 0 1 1.5-1.5H14.3" fill="none" stroke="#c0c2c6" stroke-width="2"/><path d="M13.9 -0.1L18.3 2.4 13.9 5.7z"/><path d="M17.2 8V13.4a1.5 1.5 0 0 1-1.5 1.5H3.8" fill="none" stroke="#c0c2c6" stroke-width="2"/><path d="M4.2 12.1L-0.2 15 4.2 18.1z"/></svg>
<svg style="left:242.9px;top:769.2px;" width="20.4" height="21.7" viewBox="128 112 768 784" fill="#c0c2c6"><path d="M360 184h-8c4.400 0 8-3.600 8-8v8h304v-8c0 4.400 3.600 8 8 8h-8v72h72v-80c0-35.300-28.700-64-64-64H352c-35.300 0-64 28.700-64 64v80h72v-72zm504 72H160c-17.700 0-32 14.300-32 32v32c0 4.400 3.600 8 8 8h60.400l24.700 523c1.600 34.100 29.800 61 63.900 61h454c34.200 0 62.300-26.800 63.900-61l24.700-523H888c4.400 0 8-3.600 8-8v-32c0-17.700-14.300-32-32-32zM731.300 840H292.700l-24.200-512h487l-24.200 512z"/></svg>
<div class="sw" style="left:315px;top:771px;background:#059671"><i style="left:24px"></i></div>
<span class="t s" style="left:393.50px;top:775.15px;font-size:14px;color:#c2c4c8;letter-spacing:0.262px">w74ioipe</span>
<div class="tag" style="left:586px;top:770px;width:59px;background:#111d31;border-color:#15355f"></div>
<span class="t" style="left:593.60px;top:775.94px;font-size:12px;color:#3f90e2;letter-spacing:-0.004px">0 B / 0 B</span>
<div class="tag" style="left:659px;top:770px;width:64px;background:#10231f;border-color:#164535"></div>
<span class="t" style="left:666.60px;top:775.94px;font-size:12px;color:#2fb891;letter-spacing:0.255px">Indefinite</span>
<div class="tag" style="left:875px;top:770px;width:64px;background:#10231f;border-color:#164535"></div>
<span class="t" style="left:882.60px;top:775.94px;font-size:12px;color:#2fb891;letter-spacing:0.255px">Indefinite</span>
<span class="t s" style="left:1043.10px;top:775.15px;font-size:14px;color:#c2c4c8;letter-spacing:-0.305px">nkV/I/3XoAm9v6xMT/T5IcrF4TpeTKF98rHARbRo4CI=</span>
<div style="left:43px;top:579px;width:71px;height:1px;background:#3a4250;"></div>
<div style="left:43px;top:810px;width:71px;height:1px;background:#3a4250;"></div>
<div style="left:43px;top:811px;width:1393px;height:17px;background:#222a36;"></div>
</section>
<section class="g" id="row-menu">
<div class="dd" style="left:176px;top:625px;width:193.5px;height:296px"></div>
<svg style="left:189.0px;top:640.3000000000001px;" width="10.6" height="10.6" viewBox="112 112 800 800" fill="#bfc1c5"><path d="M257.7 752c2 0 4-.2 6-.5L431.9 722c2-.4 3.9-1.3 5.3-2.8l423.9-423.9a9.96 9.96 0 0 0 0-14.1L694.9 114.900c-1.900-1.900-4.400-2.900-7.100-2.900s-5.200 1-7.100 2.900L256.800 538.800c-1.500 1.500-2.400 3.300-2.800 5.300l-29.500 168.200a33.500 33.500 0 0 0 9.400 29.800c6.600 6.400 14.900 9.900 23.800 9.900zm67.400-174.400L687.800 215l73.300 73.300-362.700 362.600-88.900 15.700 15.600-89zM880 836H144c-17.700 0-32 14.300-32 32v36c0 4.400 3.600 8 8 8h784c4.400 0 8-3.600 8-8v-36c0-17.700-14.300-32-32-32z"/></svg>
<span class="t s" style="left:211.60px;top:638.15px;font-size:14px;color:#c2c4c8;letter-spacing:0.025px">Edit</span>
<svg style="left:188.3px;top:671.7px;" width="12" height="12" viewBox="0 0 12 12" fill="#bfc1c5"><circle cx="5.6" cy="4" r="2.6" fill="none" stroke="#bfc1c5" stroke-width="1"/><path d="M1 11.2c.3-3 2.2-4.500 4.600-4.500 1 0 1.900.3 2.600.8" fill="none" stroke="#bfc1c5" stroke-width="1"/><path d="M9.400 8v3.600M7.600 9.800h3.600" fill="none" stroke="#bfc1c5" stroke-width="1"/></svg>
<span class="t s" style="left:211.60px;top:670.15px;font-size:14px;color:#c2c4c8;letter-spacing:0.123px">Add Client</span>
<svg style="left:188.3px;top:703.7px;" width="12" height="12" viewBox="0 0 12 12" fill="#bfc1c5"><circle cx="6.6" cy="4.6" r="2.3" fill="none" stroke="#bfc1c5" stroke-width="1"/><path d="M2.600 11.300c.3-2.600 1.900-4 4-4 .9 0 1.700.3 2.300.7" fill="none" stroke="#bfc1c5" stroke-width="1"/><path d="M9.600 8.300v3.400M7.900 10h3.400" fill="none" stroke="#bfc1c5" stroke-width="1"/><path d="M4 1.200c-1.500.2-2.400 1.300-2.400 2.600 0 .9.400 1.600 1 2.100M.6 10c.1-1.600.8-2.800 1.900-3.500" fill="none" stroke="#bfc1c5" stroke-width="1"/></svg>
<span class="t s" style="left:211.60px;top:702.15px;font-size:14px;color:#c2c4c8;letter-spacing:0.108px">Add Bulk</span>
<svg style="left:188.3px;top:735.7px;" width="12" height="12" viewBox="0 0 12 12" fill="#bfc1c5"><path d="M5.500 11H1.700V1h8.200v4.600" fill="none" stroke="#bfc1c5" stroke-width="1"/><path d="M3.300 3.200h5M3.300 5h2.600" fill="none" stroke="#bfc1c5" stroke-width="1"/><circle cx="8.800" cy="9" r="2.300" fill="none" stroke="#bfc1c5" stroke-width="1"/><path d="M7.300 10.400l3-2.800" fill="none" stroke="#bfc1c5" stroke-width="1"/></svg>
<span class="t s" style="left:211.60px;top:734.15px;font-size:14px;color:#c2c4c8;letter-spacing:-0.236px">Reset Clients Traffic</span>
<svg style="left:188.3px;top:767.7px;" width="12" height="12" viewBox="0 0 12 12" fill="#bfc1c5"><path d="M10.400 3.600V1.700H1.400v8.800h9V8.600" fill="none" stroke="#bfc1c5" stroke-width="1"/><path d="M4.600 6.100h5.600" fill="none" stroke="#bfc1c5" stroke-width="1"/><path d="M8.600 4.300l2.500 1.800-2.500 1.800z" stroke="none"/></svg>
<span class="t s" style="left:211.60px;top:766.15px;font-size:14px;color:#c2c4c8;letter-spacing:-0.195px">Export Links</span>
<svg style="left:188.3px;top:799.7px;" width="12" height="12" viewBox="0 0 12 12" fill="#bfc1c5"><path d="M2.600 2.200l.5 8.100a1 1 0 0 0 1 .9h3.800a1 1 0 0 0 1-.9l.5-8.100" fill="none" stroke="#bfc1c5" stroke-width="1"/><path d="M2 3.400h8M3.200 1.200h5.600" fill="none" stroke="#bfc1c5" stroke-width="1"/><circle cx="6" cy="6.800" r="1.500" fill="none" stroke="#bfc1c5" stroke-width="1"/></svg>
<span class="t s" style="left:211.60px;top:798.15px;font-size:14px;color:#c2c4c8;letter-spacing:-0.041px">Delete Depleted Clients</span>
<svg style="left:188.3px;top:831.7px;" width="12" height="12" viewBox="0 0 12 12" fill="#bfc1c5"><path d="M1.700 6.200V3.700a.9.9 0 0 1 .9-.9h6.400" fill="none" stroke="#bfc1c5" stroke-width="1"/><path d="M8.700 1.100l2.300 1.700-2.300 1.700z" stroke="none"/><path d="M10.300 5.800v2.500a.9.9 0 0 1-.9.900H3" fill="none" stroke="#bfc1c5" stroke-width="1"/><path d="M3.300 7.500L1 9.200l2.300 1.700z" stroke="none"/></svg>
<span class="t s" style="left:211.60px;top:830.15px;font-size:14px;color:#c2c4c8;letter-spacing:-0.286px">Reset Traffic</span>
<svg style="left:188.3px;top:863.7px;" width="12" height="12" viewBox="0 0 12 12" fill="#bfc1c5"><rect x="1.300" y="1.300" width="6.200" height="6.200" rx=".6" fill="none" stroke="#bfc1c5" stroke-width="1"/><rect x="4.500" y="4.500" width="6.200" height="6.200" rx=".6" fill="none" stroke="#bfc1c5" stroke-width="1"/></svg>
<span class="t s" style="left:211.60px;top:862.15px;font-size:14px;color:#c2c4c8;letter-spacing:-0.123px">Clone</span>
<svg style="left:189.20000000000002px;top:896.1px;" width="10.2" height="10.9" viewBox="128 112 768 784" fill="#e5484d"><path d="M360 184h-8c4.400 0 8-3.600 8-8v8h304v-8c0 4.400 3.600 8 8 8h-8v72h72v-80c0-35.300-28.700-64-64-64H352c-35.300 0-64 28.700-64 64v80h72v-72zm504 72H160c-17.700 0-32 14.300-32 32v32c0 4.400 3.600 8 8 8h60.400l24.700 523c1.600 34.100 29.800 61 63.900 61h454c34.200 0 62.300-26.800 63.900-61l24.700-523H888c4.400 0 8-3.600 8-8v-32c0-17.700-14.300-32-32-32zM731.300 840H292.700l-24.200-512h487l-24.200 512z"/></svg>
<span class="t s" style="left:211.60px;top:894.15px;font-size:14px;color:#e5484d;letter-spacing:0.006px">Delete</span>
</section>
</div></body></html>
